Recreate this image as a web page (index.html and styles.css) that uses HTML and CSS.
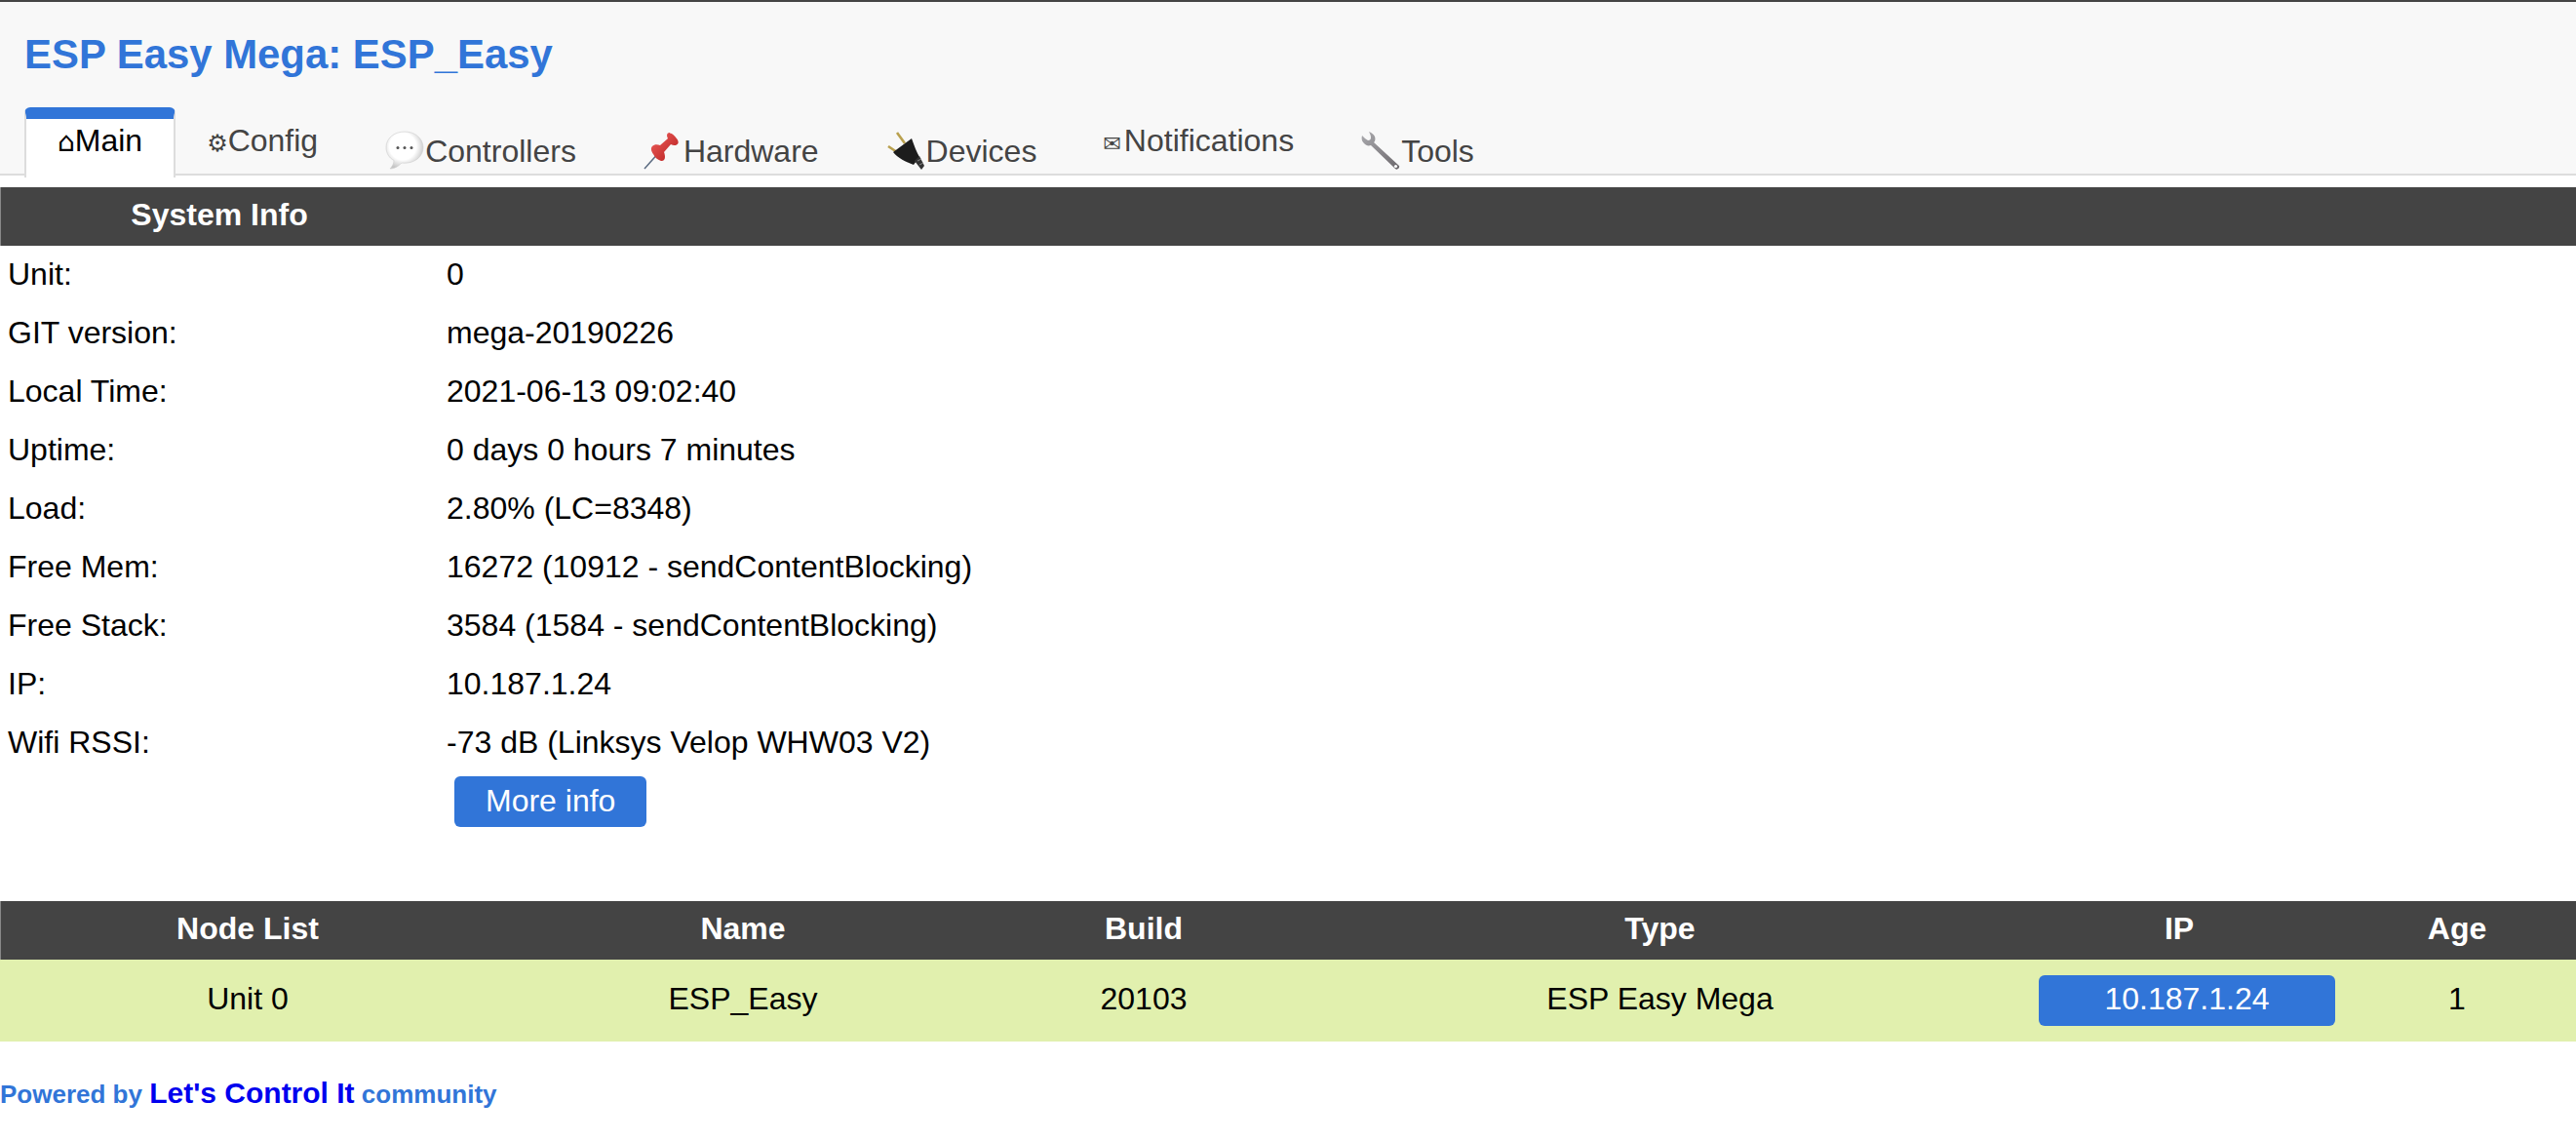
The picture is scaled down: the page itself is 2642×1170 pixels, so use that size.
FILE: index.html
```html
<!DOCTYPE html>
<html lang="en">
<head>
<meta charset="utf-8">
<title>ESP Easy Mega: ESP_Easy</title>
<link rel="stylesheet" href="styles.css">
</head>
<body>
<header class="header">
  <h1 class="title">ESP Easy Mega: ESP_Easy</h1>
  <nav class="tabs">
    <a class="tab tab-active"><span class="glyph glyph-home">⌂</span>Main</a>
    <a class="tab"><span class="glyph glyph-gear">⚙</span>Config</a>
    <a class="tab tab-emoji">
      <svg class="emoji" viewBox="0 0 40 40" aria-label="speech balloon">
        <defs><radialGradient id="bub" cx="45%" cy="40%" r="60%"><stop offset="0.6" stop-color="#ffffff"/><stop offset="1" stop-color="#c4c4c4"/></radialGradient></defs>
        <path d="M20 1C9 1 1 8 1 17c0 6 3 11 8 13.500C9 34 7 37 5 39c5 0 9-3 12-6 1 .2 2 .2 3 .2 11 0 19-7 19-16S31 1 20 1z" fill="url(#bub)" stroke="#cfcfcf" stroke-width=".6"/>
        <circle cx="13" cy="17.500" r="1.500" fill="#555"/><circle cx="20" cy="17.500" r="1.500" fill="#555"/><circle cx="27" cy="17.500" r="1.500" fill="#555"/>
      </svg>Controllers</a>
    <a class="tab tab-emoji">
      <svg class="emoji" viewBox="0 0 40 40" aria-label="pushpin">
        <defs><linearGradient id="pin" x1="0" y1="0" x2="1" y2="1"><stop offset="0" stop-color="#f0625f"/><stop offset="1" stop-color="#b51c1c"/></linearGradient></defs>
        <path d="M1 39L17 21" stroke="#5a6a80" stroke-width="1.500"/>
        <path d="M27 2c-2 0-3 1-3 3 0 1 .5 2 1 3l-8 7c-3-1-6-1-8 1-2 2-1 5 1 8 2 4 5 6 8 7 2 .5 4-1 4-4 0-2-.5-4-1-5l7-8c2 1 4 1.500 6 .5 2-1 2-3 1-5-2-3-5-7-8-7z" fill="url(#pin)"/>
      </svg>Hardware</a>
    <a class="tab tab-emoji">
      <svg class="emoji" viewBox="0 0 40 40" aria-label="electric plug">
        <path d="M2 16L11 22" stroke="#b9a04e" stroke-width="2.600"/><path d="M11 2L19 13" stroke="#b9a04e" stroke-width="2.600"/>
        <path d="M7 22L26 8c3 8 5 14 8 19l-6 8C20 32 12 28 7 22z" fill="#1c1c1c"/>
        <path d="M29 31l5-5 5 10-3 4z" fill="#333"/><path d="M32 31l4-2M34 35l4-2" stroke="#888" stroke-width="1"/>
      </svg>Devices</a>
    <a class="tab"><span class="glyph glyph-mail">✉</span>Notifications</a>
    <a class="tab tab-emoji">
      <svg class="emoji" viewBox="0 0 40 40" aria-label="wrench">
        <defs><linearGradient id="wr" x1="0" y1="0" x2="1" y2="1"><stop offset="0" stop-color="#a9a9ad"/><stop offset="1" stop-color="#6b676b"/></linearGradient></defs>
        <path d="M8 1c3 1 5 3 6 5 1 3 0 5-1 6l26 24c1 2-2 5-4 3L10 15c-3 1-5 0-7-2C1 11 0 9 1 5c2 2 4 4 6 5 2 0 3-1 3-3 0-2-1-4-2-6z" fill="url(#wr)"/>
        <circle cx="35.500" cy="36.500" r="1.600" fill="#fff"/>
      </svg>Tools</a>
  </nav>
</header>

<table class="info">
  <thead><tr><th class="info-key">System Info</th><th></th></tr></thead>
  <tbody>
    <tr><td>Unit:</td><td>0</td></tr>
    <tr><td>GIT version:</td><td>mega-20190226</td></tr>
    <tr><td>Local Time:</td><td>2021-06-13 09:02:40</td></tr>
    <tr><td>Uptime:</td><td>0 days 0 hours 7 minutes</td></tr>
    <tr><td>Load:</td><td>2.80% (LC=8348)</td></tr>
    <tr><td>Free Mem:</td><td>16272 (10912 - sendContentBlocking)</td></tr>
    <tr><td>Free Stack:</td><td>3584 (1584 - sendContentBlocking)</td></tr>
    <tr><td>IP:</td><td>10.187.1.24</td></tr>
    <tr><td>Wifi RSSI:</td><td>-73 dB (Linksys Velop WHW03 V2)</td></tr>
    <tr class="more-row"><td></td><td><a class="button">More info</a></td></tr>
  </tbody>
</table>

<table class="nodes">
  <colgroup><col class="c1"><col class="c2"><col class="c3"><col class="c4"><col class="c5"><col></colgroup>
  <thead><tr><th>Node List</th><th>Name</th><th>Build</th><th>Type</th><th>IP</th><th class="age">Age</th></tr></thead>
  <tbody>
    <tr><td>Unit 0</td><td>ESP_Easy</td><td>20103</td><td>ESP Easy Mega</td><td class="ip-cell"><a class="button button-wide">10.187.1.24</a></td><td class="age">1</td></tr>
  </tbody>
</table>

<footer class="footer">Powered by <a class="footer-link">Let's Control It</a> community</footer>
</body>
</html>
```

FILE: styles.css
```css
* { box-sizing: border-box; }
body {
  margin: 0;
  font-family: "Liberation Sans", Arial, sans-serif;
  font-size: 32px;
  color: #000;
  background: #fff;
}
.header {
  height: 180px;
  background: #f8f8f8;
  border-top: 2px solid #444;
  border-bottom: 2px solid #ddd;
  padding: 0 0 0 25px;
}
.title {
  margin: 0;
  padding-top: 29px;
  height: 108px;
  font-size: 41.9px;
  line-height: 50px;
  font-weight: bold;
  color: #3175d8;
}
.tabs {
  display: flex;
  align-items: flex-start;
}
.tab {
  display: block;
  padding: 17px 34px 0;
  color: #444;
  line-height: 34px;
  white-space: nowrap;
}
.tab-active {
  height: 72px;
  margin-right: -2px;
  padding: 5px 32px 0;
  color: #000;
  background: #fff;
  border-top: 12px solid #3175d8;
  border-left: 2px solid #ddd;
  border-right: 2px solid #ddd;
  border-radius: 6px 6px 0 0;
}
.tab-emoji { padding-top: 24px; }
.glyph { font-family: "DejaVu Sans", sans-serif; }
.glyph-home { font-size: 28px; }
.glyph-gear { font-size: 24px; }
.glyph-mail { font-size: 22px; padding-right: 3px; }
.emoji {
  width: 42px;
  height: 40px;
  vertical-align: -8px;
}
table {
  width: 100%;
  table-layout: fixed;
  border-collapse: collapse;
}
th {
  height: 60px;
  padding: 0 0 3px;
  background: #444;
  color: #fff;
  font-weight: bold;
  text-align: center;
}
th:first-child { box-shadow: inset 1px 0 #888; }
td { padding: 0; }
.info { margin-top: 12px; }
.info-key { width: 450px; }
.info td { height: 60px; padding: 0 0 2px 8px; }
.info .more-row td { height: auto; padding-bottom: 0; }
.button {
  display: inline-block;
  height: 52px;
  padding: 0 32px;
  margin: 4px 0 0 8px;
  border-radius: 6px;
  background: #3175d8;
  color: #fff;
  line-height: 50px;
  vertical-align: top;
}
.nodes { margin-top: 76px; }
.nodes td { height: 84px; padding-bottom: 3px; background: #e1f0ae; text-align: center; }
.nodes .ip-cell { padding-bottom: 0; }
.nodes .age { padding-left: 3px; }
.c1, .c2 { width: 508px; }
.c3 { width: 314px; }
.c4 { width: 745px; }
.c5 { width: 320px; }
.button-wide {
  display: block;
  margin: 0 0 0 16px;
  line-height: 48px;
  text-align: center;
}
.footer {
  margin-top: 36px;
  font-size: 26px;
  font-weight: bold;
  color: #3175d8;
}
.footer-link { font-size: 30px; color: #00e; }
```
